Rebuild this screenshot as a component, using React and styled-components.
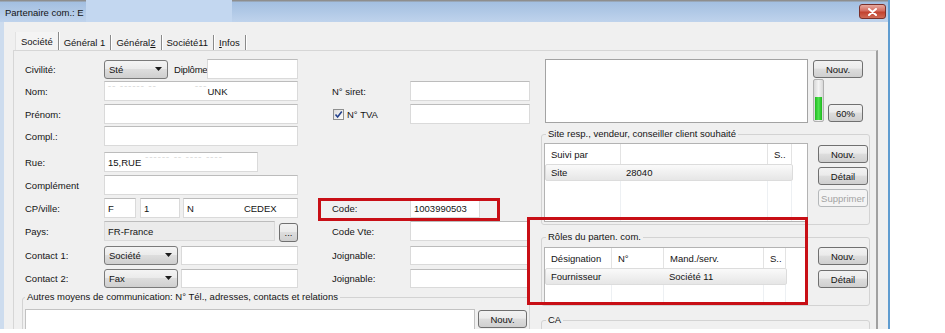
import React from 'react';
import styled, { createGlobalStyle } from 'styled-components';

const GlobalStyle = createGlobalStyle`
  html, body { margin: 0; padding: 0; background: #fff; }
  body {
    font-family: 'Liberation Sans', Arial, sans-serif;
    font-size: 9.5px;
    color: #141414;
  }
  * { box-sizing: border-box; }
`;

const Window = styled.div`
  position: relative;
  width: 890px;
  height: 329px;
  overflow: hidden;
  display: flex;
  flex-direction: column;
  background: #f0f0f0;
  border-right: 2px solid #5f9cd0;
`;

const TitleBar = styled.div`
  display: flex;
  height: 22px;
  flex-shrink: 0;
  background: linear-gradient(#8e8e8e 0, #8e8e8e 1px, #a3bfe1 2px, #bfd3ec 100%);
`;

const Title = styled.div`
  display: flex;
  align-items: center;
  padding: 2px 2px 0 5px;
  white-space: nowrap;
`;

const TitleMask = styled.div`
  width: 146px;
  background: #c3d7f0;
`;

const CloseButton = styled.div`
  width: 27px;
  height: 15px;
  margin: 4px 2px 0 auto;
  border: 1px solid #7a302a;
  border-radius: 3px;
  background: linear-gradient(#e6a99f, #d36c5f 45%, #c2422f 55%, #cf6a55);
  display: flex;
  align-items: center;
  justify-content: center;
`;

const Body = styled.div`
  flex: 1;
  min-height: 0;
  display: flex;
  flex-direction: column;
  padding: 9px 10px 0 9px;
  border-left: 4px solid #cddcee;
`;

const TabStrip = styled.div`
  display: flex;
  align-items: flex-end;
  height: 19px;
  padding-left: 2px;
`;

const Tab = styled.div`
  height: ${p => (p.active ? 18 : 15)}px;
  padding: 0 5px;
  display: flex;
  align-items: center;
  white-space: nowrap;
  border-right: 1px solid #8a8a8a;
  border-left: ${p => (p.active ? '1px solid #e2e2e2' : 'none')};
  box-shadow: 1px 0 0 #fff;
  background: ${p => (p.active ? '#f4f4f4' : 'transparent')};
`;

const TabPanel = styled.div`
  flex: 1;
  min-height: 0;
  display: flex;
  align-items: flex-start;
  border: 1px solid #d6d6d6;
  border-right: 2px solid #a1a1a1;
  border-bottom: none;
  padding: 8px 0 0 8px;
`;

const LeftPart = styled.div`
  width: 508px;
  display: flex;
  flex-direction: column;
`;

const Row = styled.div`
  display: grid;
  grid-template-columns: 82px 194px 34px 78px 120px;
  height: ${p => p.h}px;
  align-items: start;
`;

const Cell = styled.div`
  display: flex;
  align-items: center;
  height: 20px;
  gap: ${p => p.gap || 0}px;
  padding-left: ${p => p.pl || 0}px;
  white-space: nowrap;
`;

const Field = styled.div`
  width: ${p => (p.w ? `${p.w}px` : 'auto')};
  flex: ${p => (p.w ? 'none' : 1)};
  height: ${p => p.h || 20}px;
  background: ${p => (p.disabled ? '#ebebeb' : '#fff')};
  border: 1px solid #dadada;
  border-top-color: #bcbcbc;
  padding: 0 3px;
  display: flex;
  align-items: center;
  white-space: nowrap;
  overflow: hidden;
`;

const Faint = styled.span`
  color: #cdcdcd;
  margin-left: ${p => p.ml || 0}px;
  letter-spacing: 1px;
  position: relative;
  top: -3px;
`;

const Gap = styled.span`
  display: inline-block;
  flex: none;
  width: ${p => p.w}px;
`;

const Combo = styled.div`
  width: ${p => p.w}px;
  flex: none;
  height: 19px;
  border: 1px solid #7a7a7a;
  border-radius: 3px;
  background: linear-gradient(#f4f4f4, #ebebeb 45%, #dddddd 50%, #cfcfcf);
  display: flex;
  align-items: center;
  justify-content: space-between;
  padding: 0 5px 0 4px;
`;

const SideLabel = styled.div`
  flex: none;
  white-space: nowrap;
  letter-spacing: -0.2px;
`;

const CheckBox = styled.div`
  width: 11px;
  height: 11px;
  margin-left: 1px;
  border: 1px solid #8e8f8f;
  background: linear-gradient(135deg, #dcdcdc, #fdfdfd);
  display: flex;
  align-items: center;
  justify-content: center;
`;

const Button = styled.div`
  width: ${p => p.w || 50}px;
  height: ${p => p.h || 18}px;
  flex: none;
  border: 1px solid ${p => (p.disabled ? '#b5b8ba' : '#707070')};
  border-radius: 3px;
  background: ${p => (p.disabled
    ? '#f4f4f4'
    : 'linear-gradient(#f2f2f2, #ebebeb 45%, #dddddd 50%, #cfcfcf)')};
  color: ${p => (p.disabled ? '#a3a3a3' : '#141414')};
  display: flex;
  align-items: center;
  justify-content: center;
  margin-top: ${p => p.mt || 0}px;
  margin-left: ${p => p.ml || 0}px;
`;

const Group = styled.fieldset`
  margin: ${p => p.mt || 0}px 0 0;
  padding: ${p => p.pad};
  border: 1px solid #d3d3d3;
  border-radius: 3px;
  min-width: 0;
  display: flex;
  align-items: flex-start;
  gap: ${p => p.gap || 0}px;
`;

const Legend = styled.legend`
  padding: 0 2px;
  margin-left: ${p => p.ml || 0}px;
  line-height: 12px;
  white-space: nowrap;
`;

const TextArea = styled.div`
  width: 450px;
  height: 40px;
  background: #fff;
  border: 1px solid #c2c2c2;
  margin-top: 6px;
`;

const RightPart = styled.div`
  margin-left: 11px;
  width: 329px;
  display: flex;
  flex-direction: column;
`;

const TopBlock = styled.div`
  display: flex;
  height: 64px;
`;

const WhiteBox = styled.div`
  width: 263px;
  height: 64px;
  margin-left: 4px;
  background: #fff;
  border: 1px solid #a3a3a3;
`;

const SideCol = styled.div`
  width: 50px;
  margin-left: 5px;
  display: flex;
  flex-direction: column;
  gap: ${p => p.gap || 0}px;
  padding-top: ${p => p.pt || 0}px;
`;

const MeterRow = styled.div`
  display: flex;
  align-items: flex-end;
  height: 43px;
  margin-top: 1px;
`;

const Meter = styled.div`
  width: 11px;
  height: 43px;
  border: 1px solid #b0b0b0;
  border-radius: 2px;
  background: linear-gradient(90deg, #d8d8d8, #f4f4f4 50%, #d8d8d8);
  display: flex;
  flex-direction: column;
  justify-content: flex-end;
  padding: 1px;
`;

const MeterFill = styled.div`
  background: linear-gradient(90deg, #1fb81f, #4ee24e 50%, #1fb81f);
`;

const List = styled.div`
  width: 264px;
  height: ${p => p.h}px;
  flex: none;
  background: #fff;
  border: 1px solid #b3b3b3;
  display: flex;
  flex-direction: column;
  overflow: hidden;
`;

const ListHead = styled.div`
  display: flex;
  height: 20px;
  flex: none;
`;

const HeadCell = styled.div`
  width: ${p => p.w}px;
  flex: none;
  border-right: 1px solid #e3e3e3;
  padding-left: 6px;
  display: flex;
  align-items: center;
  white-space: nowrap;
  overflow: hidden;
`;

const ListRow = styled.div`
  display: flex;
  height: 17px;
  flex: none;
`;

const RowBand = styled.div`
  display: flex;
  border: 1px solid #dcdcdc;
  border-radius: 2px;
  background: linear-gradient(#fafafa, #e6e6e6);
`;

const RowCell = styled.div`
  width: ${p => p.w}px;
  flex: none;
  padding-left: 5px;
  display: flex;
  align-items: center;
  white-space: nowrap;
  overflow: hidden;
`;

const ListRest = styled.div`
  flex: 1;
  display: flex;
`;

const RestCell = styled.div`
  width: ${p => p.w}px;
  flex: none;
  border-right: 1px solid #edf0f3;
`;

const Mark = styled.div`
  position: absolute;
  left: ${p => p.x}px;
  top: ${p => p.y}px;
  width: ${p => p.w}px;
  height: ${p => p.h}px;
  border: 3px solid #c80f16;
  pointer-events: none;
`;

const Arrow = () => (
  <svg width="7" height="4" viewBox="0 0 7 4">
    <polygon points="0,0 7,0 3.5,4" fill="#1c1c1c" />
  </svg>
);

const Select = ({ w, children }) => (
  <Combo w={w}>
    <span>{children}</span>
    <Arrow />
  </Combo>
);

function ListView({ cols, headers, rows, h }) {
  return (
    <List h={h}>
      <ListHead>
        {headers.map((t, i) => <HeadCell key={i} w={cols[i]}>{t}</HeadCell>)}
      </ListHead>
      {rows.map((r, j) => (
        <ListRow key={j}>
          <RowBand>
            {r.map((t, i) => <RowCell key={i} w={cols[i] - (i === 0 ? 1 : 0)}>{t}</RowCell>)}
          </RowBand>
        </ListRow>
      ))}
      <ListRest>
        {cols.map((w, i) => <RestCell key={i} w={w} />)}
      </ListRest>
    </List>
  );
}

const meter = 60;

export default function App() {
  return (
    <>
      <GlobalStyle />
      <Window>
        <TitleBar>
          <Title>Partenaire com.: E</Title>
          <TitleMask />
          <CloseButton>
            <svg width="9" height="8" viewBox="0 0 9 8">
              <path d="M1 1 L8 7 M8 1 L1 7" stroke="#fff" strokeWidth="2" strokeLinecap="round" />
            </svg>
          </CloseButton>
        </TitleBar>
        <Body>
          <TabStrip>
            <Tab active>Société</Tab>
            <Tab>Général 1</Tab>
            <Tab>Général <u>2</u></Tab>
            <Tab>Société11</Tab>
            <Tab><u>I</u>nfos</Tab>
          </TabStrip>
          <TabPanel>
            <LeftPart>
              <Row h={22}>
                <Cell pl={3}>Civilité:</Cell>
                <Cell>
                  <Select w={64}>Sté</Select>
                  <Gap w={6} />
                  <SideLabel>Diplôme</SideLabel>
                  <Field />
                </Cell>
                <div /><div /><div />
              </Row>
              <Row h={23}>
                <Cell pl={3}>Nom:</Cell>
                <Cell><Field><Faint>ˉˉ ˉˉˉˉˉˉ ˉˉ</Faint><Gap w={38} /><Faint>ˉˉˉ</Faint>UNK</Field></Cell>
                <div />
                <Cell>N° siret:</Cell>
                <Cell><Field /></Cell>
              </Row>
              <Row h={22}>
                <Cell pl={3}>Prénom:</Cell>
                <Cell><Field /></Cell>
                <div />
                <Cell gap={3}>
                  <CheckBox>
                    <svg width="9" height="9" viewBox="0 0 9 9">
                      <path d="M1.5 4.5 L3.6 7 L7.8 1.5" stroke="#23418c" strokeWidth="1.6" fill="none" />
                    </svg>
                  </CheckBox>
                  N° TVA
                </Cell>
                <Cell><Field /></Cell>
              </Row>
              <Row h={26}>
                <Cell pl={3}>Compl.:</Cell>
                <Cell><Field /></Cell>
                <div /><div /><div />
              </Row>
              <Row h={23}>
                <Cell pl={3}>Rue:</Cell>
                <Cell><Field w={154}>15,RUE<Faint ml={4}>ˉˉˉˉˉˉ ˉˉ ˉˉˉˉ ˉˉˉˉ</Faint></Field></Cell>
                <div /><div /><div />
              </Row>
              <Row h={23}>
                <Cell pl={3}>Complément</Cell>
                <Cell><Field /></Cell>
                <div /><div /><div />
              </Row>
              <Row h={23}>
                <Cell pl={3}>CP/ville:</Cell>
                <Cell>
                  <Field w={32}>F</Field>
                  <Gap w={4} />
                  <Field w={40}>1</Field>
                  <Gap w={3} />
                  <Field>N<Gap w={50} />CEDEX</Field>
                </Cell>
                <div />
                <Cell>Code:</Cell>
                <Cell><Field w={70}>1003990503</Field></Cell>
              </Row>
              <Row h={24}>
                <Cell pl={3}>Pays:</Cell>
                <Cell>
                  <Field w={171} disabled>FR-France</Field>
                  <Gap w={4} />
                  <Button w={19} h={19} mt={2}>...</Button>
                </Cell>
                <div />
                <Cell>Code Vte:</Cell>
                <Cell><Field /></Cell>
              </Row>
              <Row h={23}>
                <Cell pl={3}>Contact 1:</Cell>
                <Cell>
                  <Select w={74}>Société</Select>
                  <Gap w={3} />
                  <Field h={19} />
                </Cell>
                <div />
                <Cell>Joignable:</Cell>
                <Cell><Field h={19} /></Cell>
              </Row>
              <Row h={23}>
                <Cell pl={3}>Contact 2:</Cell>
                <Cell>
                  <Select w={74}>Fax</Select>
                  <Gap w={3} />
                  <Field h={19} />
                </Cell>
                <div />
                <Cell>Joignable:</Cell>
                <Cell><Field h={19} /></Cell>
              </Row>
              <Group pad="0 2px 4px 2px" gap={3}>
                <Legend>Autres moyens de communication: N° Tél., adresses, contacts et relations</Legend>
                <TextArea />
                <Button mt={7} w={49}>Nouv.</Button>
              </Group>
            </LeftPart>

            <RightPart>
              <TopBlock>
                <WhiteBox />
                <SideCol pt={1}>
                  <Button>Nouv.</Button>
                  <MeterRow>
                    <Meter>
                      <MeterFill style={{ height: `${meter}%` }} />
                    </Meter>
                    <Button w={35} ml={4}>60%</Button>
                  </MeterRow>
                </SideCol>
              </TopBlock>

              <Group mt={5} pad="3px 6px 2px 2px" gap={5}>
                <Legend ml={2}>Site resp., vendeur, conseiller client souhaité</Legend>
                <ListView
                  h={79}
                  cols={[76, 147, 24]}
                  headers={['Suivi par', '', 'S..']}
                  rows={[['Site', '28040', '']]}
                />
                <SideCol gap={4} pt={2}>
                  <Button>Nouv.</Button>
                  <Button>Détail</Button>
                  <Button disabled>Supprimer</Button>
                </SideCol>
              </Group>

              <Group mt={6} pad="4px 6px 2px 2px" gap={5}>
                <Legend ml={2}>Rôles du parten. com.</Legend>
                <ListView
                  h={56}
                  cols={[67, 52, 100, 22]}
                  headers={['Désignation', 'N°', 'Mand./serv.', 'S..']}
                  rows={[['Fournisseur', '', 'Société 11', '']]}
                />
                <SideCol gap={5}>
                  <Button>Nouv.</Button>
                  <Button>Détail</Button>
                </SideCol>
              </Group>

              <Group mt={8} pad="3px 6px 2px 2px" gap={5}>
                <Legend ml={2}>CA</Legend>
                <ListView h={40} cols={[76, 147, 24]} headers={['', '', '']} rows={[]} />
                <SideCol pt={1}>
                  <Button />
                </SideCol>
              </Group>
            </RightPart>
          </TabPanel>
        </Body>
        <Mark x={318} y={198} w={182} h={23} />
        <Mark x={527} y={217} w={281} h={88} />
      </Window>
    </>
  );
}
